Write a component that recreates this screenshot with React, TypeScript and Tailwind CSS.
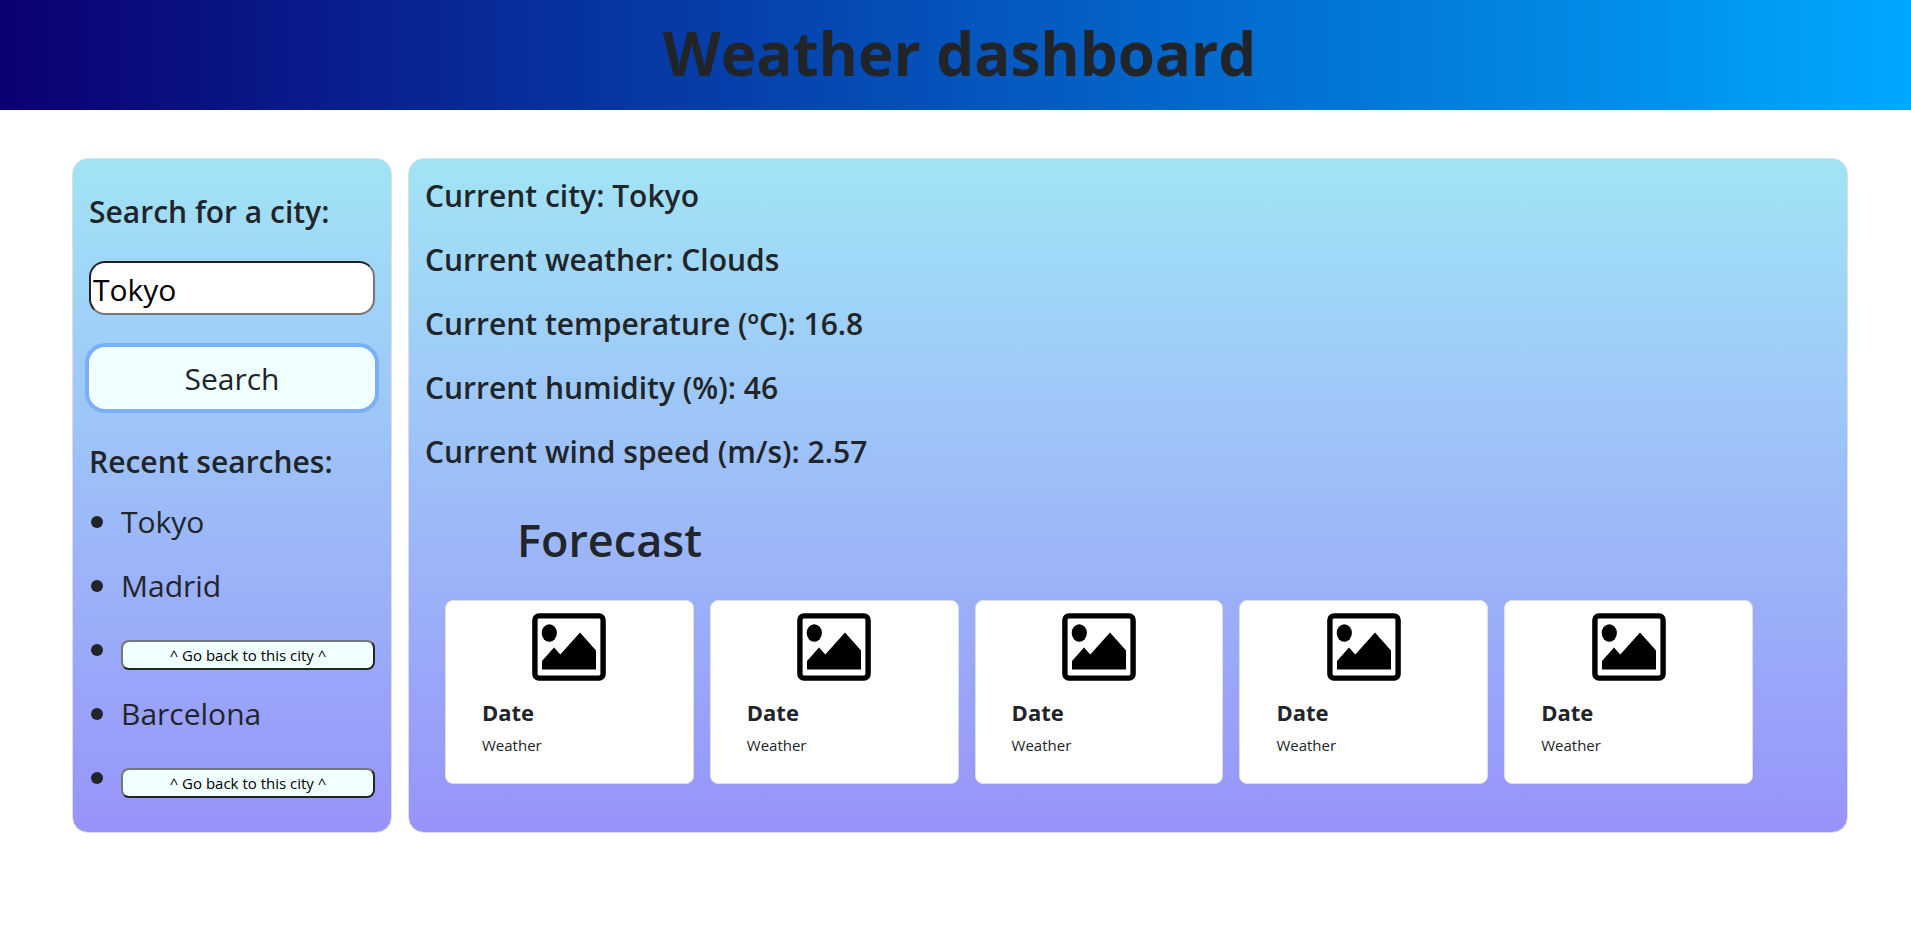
import { useState } from "react";

const readings = [
  ["Current city:", "Tokyo"],
  ["Current weather:", "Clouds"],
  ["Current temperature (ºC):", "16.8"],
  ["Current humidity (%):", "46"],
  ["Current wind speed (m/s):", "2.57"],
];

const forecast = [1, 2, 3, 4, 5];

function PictureIcon() {
  return (
    <svg
      viewBox="0 0 74 68"
      className="mx-auto h-[68px] w-[74px]"
      aria-hidden="true"
    >
      <rect x="2.9" y="2.9" width="68.2" height="62.2" rx="4" fill="none" stroke="#000" strokeWidth="5.4" />
      <ellipse cx="17.3" cy="20" rx="7.6" ry="8.8" />
      <path d="M10 48 22 34.5 28.3 41.5 48 19.5 64 37.5V56.5H10Z" />
    </svg>
  );
}

function Reading({ label, value }: { label: string; value: string }) {
  return (
    <p className="text-[30px] leading-[40px] font-semibold">
      {label} {value}
    </p>
  );
}

function ForecastCard() {
  return (
    <article className="h-[184px] rounded-lg border border-[#dfdfdf] bg-white pt-3">
      <PictureIcon />
      <div className="px-9 pt-4">
        <h3 className="text-[22px] leading-[30px] font-bold">Date</h3>
        <p className="pt-[6px] text-[15px] leading-[24px]">Weather</p>
      </div>
    </article>
  );
}

function BackButton() {
  return (
    <button
      type="button"
      className="block h-[30px] w-full rounded-lg border-2 border-t-[#767676] border-r-[#212529] border-b-[#212529] border-l-[#767676] bg-[#f0ffff] text-[15px] leading-[24px] text-black"
    >
      ^ Go back to this city ^
    </button>
  );
}

function Bullet({ children }: { children: React.ReactNode }) {
  return (
    <li className="flex h-16 items-start">
      <span className="mt-[18px] ml-[2px] h-3 w-3 shrink-0 rounded-full bg-[#212529]" />
      <div className="ml-[18px] flex-1 text-[30px] leading-[48px]">{children}</div>
    </li>
  );
}

export default function App() {
  const [city, setCity] = useState("Tokyo");

  return (
    <div className="min-h-screen bg-white font-['Open_Sans','Noto_Sans',sans-serif] text-[#212529]">
      <header className="flex h-[110px] items-center justify-center bg-[linear-gradient(90deg,#0b0073_0%,#0550b8_48%,#00a8ff_100%)] pb-1 pl-2">
        <h1 className="text-[60px] leading-[76px] font-bold">Weather dashboard</h1>
      </header>

      <main className="flex gap-4 pt-12 pr-[63px] pl-[72px]">
        <aside className="w-[320px] shrink-0 rounded-2xl border border-[#dfdfdf] bg-linear-to-b from-[#a1e4f5] to-[#9793f9] px-4 pb-[14px]">
          <form onSubmit={(event) => event.preventDefault()}>
            <label htmlFor="city" className="block pt-[33px] text-[30px] leading-[40px] font-semibold">
              Search for a city:
            </label>
            <input
              id="city"
              value={city}
              onChange={(event) => setCity(event.target.value)}
              className="mt-[29px] block h-[54px] w-full rounded-2xl border-2 border-t-[#212121] border-r-[#767676] border-b-[#767676] border-l-[#212121] bg-white px-[2px] pt-[2px] text-[30px] text-black outline-none"
            />
            <button
              type="submit"
              className="mt-8 block h-[62px] w-full rounded-2xl bg-[#f0ffff] pt-[2px] text-[30px] leading-[48px] ring-4 ring-[#7ab0f8]"
            >
              Search
            </button>
          </form>
          <h2 className="pt-[33px] text-[30px] leading-[40px] font-semibold">Recent searches:</h2>
          <ul className="pt-4">
            <Bullet>Tokyo</Bullet>
            <Bullet>Madrid</Bullet>
            <Bullet>
              <div className="pt-[14px]">
                <BackButton />
              </div>
            </Bullet>
            <Bullet>Barcelona</Bullet>
            <Bullet>
              <div className="pt-[14px]">
                <BackButton />
              </div>
            </Bullet>
          </ul>
        </aside>

        <section className="min-w-0 flex-1 rounded-2xl border border-[#dfdfdf] bg-linear-to-b from-[#a1e4f5] to-[#9793f9] px-4 pt-[17px]">
          <div className="flex flex-col gap-6">
            {readings.map(([label, value]) => (
              <Reading key={label} label={label} value={value} />
            ))}
          </div>
          <h2 className="pt-9 pl-[92px] text-[45px] leading-[64px] font-semibold">Forecast</h2>
          <div className="grid grid-cols-5 gap-4 pt-7 pr-[78px] pl-5">
            {forecast.map((day) => (
              <ForecastCard key={day} />
            ))}
          </div>
        </section>
      </main>
    </div>
  );
}
